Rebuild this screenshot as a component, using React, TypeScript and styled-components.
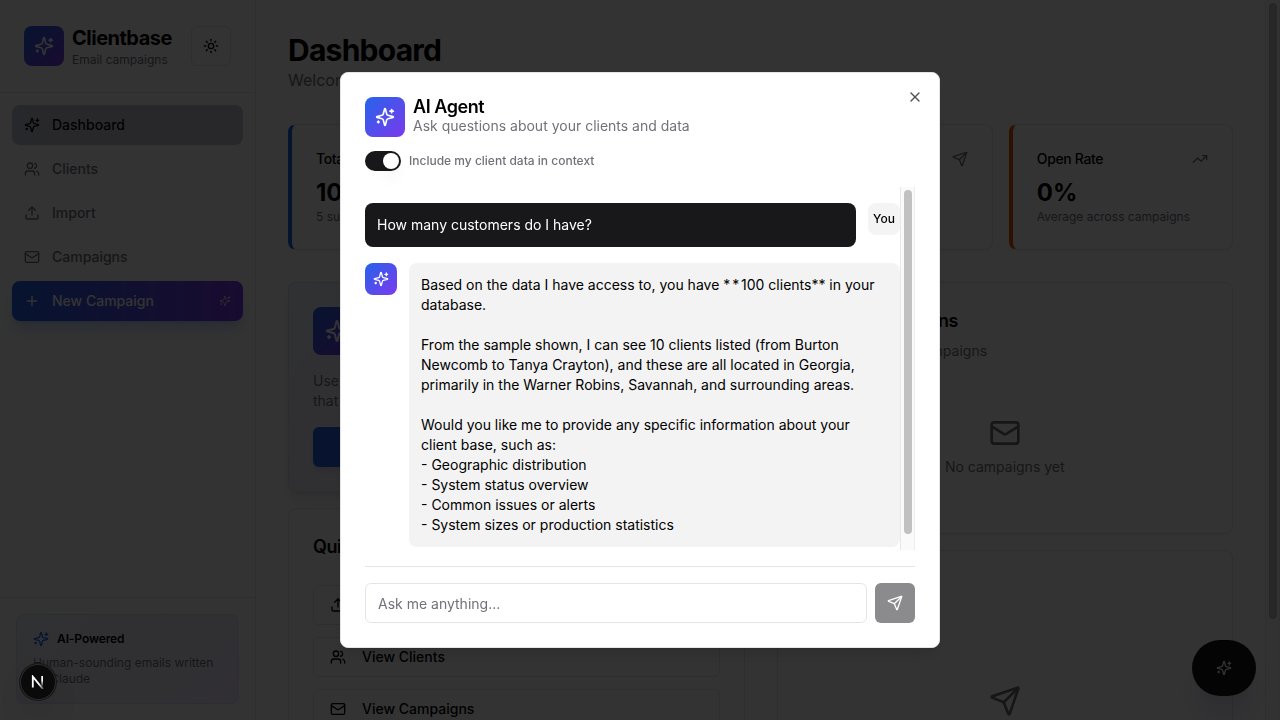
import React from 'react';
import styled, { createGlobalStyle, css } from 'styled-components';
import { Sun, Users, Upload, Mail, Plus, Send, TrendingUp, X } from 'lucide-react';

const GlobalStyle = createGlobalStyle`
  *, *::before, *::after { box-sizing: border-box; }
  html, body { margin: 0; height: 100%; overflow: hidden; }
  body {
    font-family: Inter, "Liberation Sans", sans-serif;
    font-size: 16px;
    line-height: 24px;
    color: #000;
    background: #fff;
    -webkit-font-smoothing: antialiased;
  }
  p, h1, h2, h3 { margin: 0; }
  button, input { font: inherit; }
  svg { display: block; flex-shrink: 0; }
`;

const brand = 'linear-gradient(135deg, #2563eb, #7c3aed)';
const muted = '#71717a';
const line = '#e4e4e7';

const Sparkles = ({ size = 16 }: { size?: number }) => (
  <svg width={size} height={size} viewBox="0 0 24 24" fill="none" stroke="currentColor" strokeWidth="2" strokeLinecap="round" strokeLinejoin="round">
    <path d="M9.937 15.5A2 2 0 0 0 8.5 14.063l-6.135-1.582a.5.5 0 0 1 0-.962L8.5 9.936A2 2 0 0 0 9.937 8.5l1.582-6.135a.5.5 0 0 1 .963 0L14.063 8.5A2 2 0 0 0 15.5 9.937l6.135 1.581a.5.5 0 0 1 0 .964L15.5 14.063a2 2 0 0 0-1.437 1.437l-1.582 6.135a.5.5 0 0 1-.963 0z" />
    <path d="M20 3v4" />
    <path d="M22 5h-4" />
    <path d="M4 17v2" />
    <path d="M5 18H3" />
  </svg>
);

const Shell = styled.div`
  display: flex;
  height: 720px;
`;

const Sidebar = styled.aside`
  width: 256px;
  flex-shrink: 0;
  display: flex;
  flex-direction: column;
  border-right: 1px solid ${line};
`;

const SidebarHeader = styled.div`
  display: flex;
  align-items: center;
  gap: 8px;
  padding: 24px;
  border-bottom: 1px solid ${line};
`;

const GradientTile = styled.div<{ $size: number }>`
  width: ${p => p.$size}px;
  height: ${p => p.$size}px;
  flex-shrink: 0;
  display: flex;
  align-items: center;
  justify-content: center;
  border-radius: 8px;
  color: #fff;
  background: ${brand};
`;

const BrandText = styled.div`
  flex: 1;
  white-space: nowrap;
`;

const BrandName = styled.h1`
  font-size: 20px;
  line-height: 28px;
  font-weight: 700;
  letter-spacing: -0.5px;
`;

const Caption = styled.p`
  font-size: 12px;
  line-height: 16px;
  color: ${muted};
`;

const ThemeButton = styled.button`
  width: 40px;
  height: 40px;
  display: flex;
  align-items: center;
  justify-content: center;
  padding: 0;
  border: 1px solid ${line};
  border-radius: 6px;
  background: #fff;
  color: inherit;
`;

const Nav = styled.nav`
  flex: 1;
  display: flex;
  flex-direction: column;
  gap: 4px;
  padding: 12px;
`;

const NavItem = styled.a<{ $kind?: 'active' | 'cta' }>`
  display: flex;
  align-items: center;
  gap: 12px;
  height: 40px;
  padding: 0 12px;
  border-radius: 8px;
  font-size: 14px;
  line-height: 20px;
  font-weight: 500;
  color: ${muted};
  ${p => p.$kind === 'active' && css`
    color: #09090b;
    background: linear-gradient(90deg, #c4c8d4, #c9c8d8);
  `}
  ${p => p.$kind === 'cta' && css`
    color: #fff;
    background: linear-gradient(90deg, #2563eb, #7c3aed);
    box-shadow: 0 10px 15px -3px rgba(37, 99, 235, 0.25), 0 4px 6px -4px rgba(37, 99, 235, 0.25);
  `}
`;

const NavTrail = styled.span`
  margin-left: auto;
  opacity: 0.7;
`;

const SidebarFooter = styled.div`
  padding: 16px;
  border-top: 1px solid ${line};
`;

const Promo = styled.div`
  padding: 16px;
  border: 1px solid rgba(59, 130, 246, 0.1);
  border-radius: 8px;
  background: linear-gradient(135deg, rgba(37, 99, 235, 0.08), rgba(124, 58, 237, 0.1));
`;

const PromoTitle = styled.div`
  display: flex;
  align-items: center;
  gap: 8px;
  margin-bottom: 8px;
  font-size: 12px;
  line-height: 16px;
  font-weight: 600;
  letter-spacing: -0.1px;
  svg { color: #2563eb; }
`;

const Main = styled.main`
  flex: 1;
  min-width: 0;
  padding: 32px;
  overflow: hidden;
`;

const PageTitle = styled.h2`
  font-size: 30px;
  line-height: 36px;
  font-weight: 700;
  letter-spacing: -0.75px;
`;

const PageSub = styled.p`
  color: ${muted};
  margin-bottom: 32px;
`;

const StatGrid = styled.div`
  display: grid;
  grid-template-columns: repeat(4, 1fr);
  gap: 16px;
  margin-bottom: 32px;
`;

const Card = styled.section<{ $accent?: string; $tinted?: boolean }>`
  padding: 24px;
  border: 1px solid ${line};
  border-radius: 8px;
  background: #fff;
  box-shadow: 0 1px 2px rgba(0, 0, 0, 0.05);
  ${p => p.$accent && css`border-left: 4px solid ${p.$accent};`}
  ${p => p.$tinted && css`
    border-color: rgba(59, 130, 246, 0.12);
    background: linear-gradient(135deg, rgba(37, 99, 235, 0.08), rgba(124, 58, 237, 0.12));
    box-shadow: 0 10px 15px -3px rgba(0, 0, 0, 0.1), 0 4px 6px -4px rgba(0, 0, 0, 0.1);
  `}
`;

const StatHead = styled.div`
  display: flex;
  align-items: center;
  justify-content: space-between;
  padding-bottom: 8px;
  font-size: 14px;
  line-height: 20px;
  font-weight: 500;
  letter-spacing: -0.35px;
  svg { color: ${muted}; }
`;

const StatValue = styled.div`
  font-size: 24px;
  line-height: 32px;
  font-weight: 700;
`;

const Columns = styled.div`
  display: grid;
  grid-template-columns: 1fr 1fr;
  gap: 32px;
`;

const Column = styled.div`
  display: flex;
  flex-direction: column;
  gap: 16px;
`;

const CardTitle = styled.h3`
  font-size: 18px;
  line-height: 28px;
  font-weight: 600;
  letter-spacing: -0.45px;
`;

const CardText = styled.p`
  font-size: 14px;
  line-height: 20px;
  color: ${muted};
`;

const AssistantHead = styled.div`
  display: flex;
  align-items: center;
  gap: 12px;
  margin-bottom: 16px;
`;

const AssistantButton = styled.button`
  width: 100%;
  height: 40px;
  margin-top: 16px;
  border: 0;
  border-radius: 6px;
  font-size: 14px;
  font-weight: 500;
  color: #fff;
  background: linear-gradient(90deg, #2563eb, #7c3aed);
  box-shadow: 0 4px 6px -1px rgba(0, 0, 0, 0.1);
`;

const ActionList = styled.div`
  display: flex;
  flex-direction: column;
  gap: 12px;
  margin-top: 24px;
`;

const ActionButton = styled.button`
  display: flex;
  align-items: center;
  gap: 16px;
  height: 40px;
  padding: 0 16px;
  border: 1px solid ${line};
  border-radius: 6px;
  background: #fff;
  color: inherit;
  font-size: 14px;
  line-height: 20px;
  font-weight: 500;
`;

const EmptyState = styled.div`
  display: flex;
  flex-direction: column;
  align-items: center;
  gap: 8px;
  margin-top: 24px;
  padding: 32px 0;
  font-size: 14px;
  line-height: 20px;
  color: ${muted};
`;

const SubText = styled(CardText)`
  margin-top: 6px;
`;

const ScrollTrack = styled.div`
  width: 15px;
  flex-shrink: 0;
  display: flex;
  justify-content: center;
  padding: 3px 0;
  background: #fafafa;
  border-left: 1px solid #e8e8e8;
  border-right: 1px solid #ededed;
`;

const ScrollThumb = styled.div<{ $height: number }>`
  width: 8px;
  height: ${p => p.$height}px;
  border-radius: 4px;
  background: #c1c1c1;
`;

const Fab = styled.button`
  position: fixed;
  right: 24px;
  bottom: 24px;
  width: 64px;
  height: 56px;
  display: flex;
  align-items: center;
  justify-content: center;
  padding: 0;
  border: 0;
  border-radius: 28px;
  background: #18181b;
  color: #fafafa;
  box-shadow: 0 25px 30px -5px rgba(37, 60, 200, 0.14), 0 8px 10px -6px rgba(37, 60, 200, 0.1);
`;

const Overlay = styled.div`
  position: fixed;
  inset: 0;
  display: flex;
  align-items: center;
  justify-content: center;
  background: rgba(0, 0, 0, 0.8);
`;

const Dialog = styled.div`
  position: relative;
  width: 600px;
  height: 576px;
  display: flex;
  flex-direction: column;
  padding: 24px;
  border: 1px solid ${line};
  border-radius: 8px;
  background: #fff;
  box-shadow: 0 10px 15px -3px rgba(0, 0, 0, 0.1), 0 4px 6px -4px rgba(0, 0, 0, 0.1);
`;

const CloseButton = styled.button`
  position: absolute;
  top: 16px;
  right: 16px;
  padding: 0;
  border: 0;
  background: none;
  color: #09090b;
  opacity: 0.7;
`;

const DialogHeader = styled.header`
  display: flex;
  align-items: center;
  gap: 8px;
`;

const DialogTitle = styled.h2`
  font-size: 18px;
  line-height: 18px;
  font-weight: 600;
  letter-spacing: -0.45px;
`;

const ToggleRow = styled.label`
  display: flex;
  align-items: center;
  gap: 8px;
  height: 20px;
  margin: 14px 0 16px;
  font-size: 12px;
  font-weight: 500;
  color: ${muted};
`;

const Toggle = styled.span`
  width: 36px;
  height: 20px;
  display: flex;
  justify-content: flex-end;
  padding: 2px;
  border-radius: 10px;
  background: #18181b;
`;

const ToggleKnob = styled.span`
  width: 16px;
  height: 16px;
  border-radius: 50%;
  background: #fff;
  box-shadow: 0 10px 15px -3px rgba(0, 0, 0, 0.1), 0 4px 6px -4px rgba(0, 0, 0, 0.1);
`;

const Chat = styled.div`
  flex: 1;
  min-height: 0;
  display: flex;
`;

const Messages = styled.div`
  flex: 1;
  display: flex;
  flex-direction: column;
  gap: 16px;
  padding-top: 16px;
`;

const Message = styled.div`
  display: flex;
  align-items: flex-start;
  gap: 12px;
`;

const Bubble = styled.div<{ $own?: boolean }>`
  flex: 1;
  padding: 12px;
  border-radius: 8px;
  font-size: 14px;
  line-height: 20px;
  white-space: pre-wrap;
  color: ${p => (p.$own ? '#fff' : '#000')};
  background: ${p => (p.$own ? '#18181b' : '#f3f3f3')};
`;

const Stars = styled.span`
  letter-spacing: 1.9px;
`;

const You = styled.div`
  width: 32px;
  height: 32px;
  display: flex;
  align-items: center;
  justify-content: center;
  border-radius: 8px;
  font-size: 12px;
  font-weight: 500;
  background: #f4f4f5;
`;

const Composer = styled.form`
  display: flex;
  gap: 8px;
  margin-top: 16px;
  padding-top: 16px;
  border-top: 1px solid ${line};
`;

const Field = styled.input`
  flex: 1;
  height: 40px;
  padding: 8px 12px;
  border: 1px solid ${line};
  border-radius: 6px;
  font-size: 14px;
  line-height: 20px;
  outline: 0;
  &::placeholder { color: ${muted}; opacity: 1; }
`;

const SendButton = styled.button`
  width: 40px;
  height: 40px;
  display: flex;
  align-items: center;
  justify-content: center;
  padding: 0;
  border: 0;
  border-radius: 6px;
  color: #fff;
  background: #8b8b8d;
`;

const DevBadge = styled.div`
  position: fixed;
  left: 20px;
  bottom: 20px;
  width: 36px;
  height: 36px;
  border-radius: 50%;
  background: #0a0a0a;
  box-shadow: 0 0 0 1px #171717, inset 0 0 0 1px #2c2c2c, 0 16px 32px -8px rgba(0, 0, 0, 0.24);
  display: flex;
  align-items: center;
  justify-content: center;
`;

const replyRest = `100 clients** in your database.

From the sample shown, I can see 10 clients listed (from Burton Newcomb to Tanya Crayton), and these are all located in Georgia, primarily in the Warner Robins, Savannah, and surrounding areas.

Would you like me to provide any specific information about your client base, such as:
- Geographic distribution
- System status overview
- Common issues or alerts
- System sizes or production statistics`;

const stats = [
  { label: 'Total Clients', value: '100', note: '5 subscribed', accent: '#2563eb', icon: <Users size={16} /> },
  { label: 'Campaigns', value: '0', note: '0 drafts', accent: '#7c3aed', icon: <Mail size={16} /> },
  { label: 'Emails Sent', value: '0', note: 'All time', accent: '#16a34a', icon: <Send size={16} /> },
  { label: 'Open Rate', value: '0%', note: 'Average across campaigns', accent: '#ea580c', icon: <TrendingUp size={16} /> },
];

export default function App() {
  return (
    <>
      <GlobalStyle />
      <Shell>
        <Sidebar>
          <SidebarHeader>
            <GradientTile $size={40}><Sparkles size={20} /></GradientTile>
            <BrandText>
              <BrandName>Clientbase</BrandName>
              <Caption>Email campaigns</Caption>
            </BrandText>
            <ThemeButton aria-label="Toggle theme"><Sun size={16} /></ThemeButton>
          </SidebarHeader>
          <Nav>
            <NavItem $kind="active"><Sparkles />Dashboard</NavItem>
            <NavItem><Users size={16} />Clients</NavItem>
            <NavItem><Upload size={16} />Import</NavItem>
            <NavItem><Mail size={16} />Campaigns</NavItem>
            <NavItem $kind="cta">
              <Plus size={16} />New Campaign
              <NavTrail><Sparkles size={12} /></NavTrail>
            </NavItem>
          </Nav>
          <SidebarFooter>
            <Promo>
              <PromoTitle><Sparkles />AI-Powered</PromoTitle>
              <Caption>Human-sounding emails written by Claude</Caption>
            </Promo>
          </SidebarFooter>
        </Sidebar>

        <Main>
          <PageTitle>Dashboard</PageTitle>
          <PageSub>Welcome back</PageSub>
          <StatGrid>
            {stats.map(s => (
              <Card key={s.label} $accent={s.accent}>
                <StatHead>{s.label}{s.icon}</StatHead>
                <StatValue>{s.value}</StatValue>
                <Caption>{s.note}</Caption>
              </Card>
            ))}
          </StatGrid>
          <Columns>
            <Column>
              <Card $tinted>
                <AssistantHead>
                  <GradientTile $size={48}><Sparkles size={24} /></GradientTile>
                  <CardTitle>AI Campaigns</CardTitle>
                </AssistantHead>
                <CardText>Use AI to write personal, human-sounding emails<br />that your clients will want to read</CardText>
                <AssistantButton>Create Campaign</AssistantButton>
              </Card>
              <Card>
                <CardTitle>Quick Actions</CardTitle>
                <ActionList>
                  <ActionButton><Upload size={16} />Import Clients</ActionButton>
                  <ActionButton><Users size={16} />View Clients</ActionButton>
                  <ActionButton><Mail size={16} />View Campaigns</ActionButton>
                </ActionList>
              </Card>
            </Column>
            <Column>
              <Card>
                <CardTitle>Recent Campaigns</CardTitle>
                <SubText>Your latest email campaigns</SubText>
                <EmptyState><Mail size={32} />No campaigns yet</EmptyState>
              </Card>
              <Card>
                <CardTitle>Activity</CardTitle>
                <SubText>Recent emails</SubText>
                <EmptyState><Send size={32} /></EmptyState>
              </Card>
            </Column>
          </Columns>
        </Main>
        <ScrollTrack><ScrollThumb $height={616} /></ScrollTrack>
      </Shell>

      <Fab aria-label="Open AI agent"><Sparkles /></Fab>

      <Overlay>
        <Dialog role="dialog">
          <DialogHeader>
            <GradientTile $size={40}><Sparkles size={20} /></GradientTile>
            <div>
              <DialogTitle>AI Agent</DialogTitle>
              <CardText>Ask questions about your clients and data</CardText>
            </div>
          </DialogHeader>
          <ToggleRow>
            <Toggle><ToggleKnob /></Toggle>
            Include my client data in context
          </ToggleRow>
          <Chat>
            <Messages>
              <Message>
                <Bubble $own>How many customers do I have?</Bubble>
                <You>You</You>
              </Message>
              <Message>
                <GradientTile $size={32}><Sparkles /></GradientTile>
                <Bubble>
                  Based on the data I have access to, you have <Stars>**</Stars>{replyRest}
                </Bubble>
              </Message>
            </Messages>
            <ScrollTrack><ScrollThumb $height={344} /></ScrollTrack>
          </Chat>
          <Composer>
            <Field placeholder="Ask me anything..." />
            <SendButton type="button" aria-label="Send"><Send size={16} /></SendButton>
          </Composer>
          <CloseButton aria-label="Close"><X size={16} /></CloseButton>
        </Dialog>
      </Overlay>

      <DevBadge>
        <svg width="14" height="14" viewBox="0 0 14 14" fill="none">
          <defs>
            <linearGradient id="stem" x1="0" y1="0" x2="0" y2="1">
              <stop offset="0.4" stopColor="#fff" />
              <stop offset="1" stopColor="#fff" stopOpacity="0" />
            </linearGradient>
            <linearGradient id="slash" x1="0" y1="0" x2="1" y2="1">
              <stop offset="0.6" stopColor="#fff" />
              <stop offset="1" stopColor="#fff" stopOpacity="0.3" />
            </linearGradient>
          </defs>
          <path d="M1.8 12.6V1.6L12 14" stroke="url(#slash)" strokeWidth="1.8" />
          <rect x="10.3" y="1" width="1.7" height="11" fill="url(#stem)" />
        </svg>
      </DevBadge>
    </>
  );
}
